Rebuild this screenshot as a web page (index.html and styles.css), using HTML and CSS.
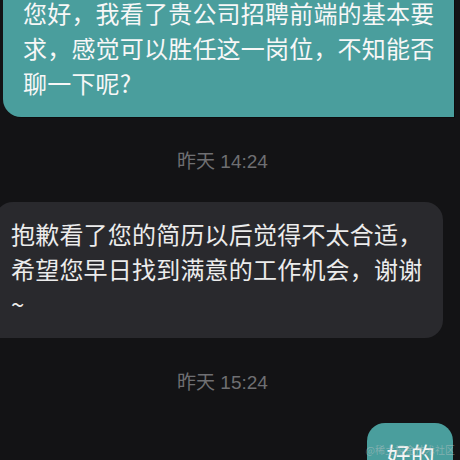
FILE: index.html
```html
<!DOCTYPE html>
<html lang="zh-CN">
<head>
<meta charset="utf-8">
<title>聊天</title>
<link rel="stylesheet" href="styles.css">
</head>
<body>
<div class="chat">
  <div class="bubble mine first">您好，我看了贵公司招聘前端的基本要求，感觉可以胜任这一岗位，不知能否聊一下呢?</div>
  <div class="time">昨天 14:24</div>
  <div class="bubble theirs">抱歉看了您的简历以后觉得不太合适，希望您早日找到满意的工作机会，谢谢~</div>
  <div class="time">昨天 15:24</div>
  <div class="bubble mine last">好的</div>
</div>
<div class="watermark">@稀土掘金技术社区</div>
</body>
</html>
```
FILE: styles.css
```css
html, body {
  margin: 0;
  padding: 0;
  background: #131315;
  height: 100%;
  overflow: hidden;
}
body {
  position: relative;
  font-family: "Noto Sans CJK SC", "Liberation Sans", sans-serif;
}
.chat {
  display: flex;
  flex-direction: column;
}
.bubble {
  font-size: 24px;
  line-height: 35px;
  letter-spacing: 0.2px;
  padding: 14px 18px 17px 20px;
  box-sizing: border-box;
  word-break: normal;
}
.mine {
  background: #4a9e9d;
  color: #f7f7f7;
  align-self: flex-end;
}
.first {
  margin: -19px 6px 0 3px;
  width: 451px;
  border-radius: 18px 18px 0 18px;
  box-shadow: 1px 1px 0 rgba(0, 0, 0, 0.35);
}
.last {
  margin-right: 7px;
  border-radius: 18px 18px 0 18px;
}
.theirs {
  background: #29292d;
  color: #ececec;
  align-self: flex-start;
  margin-left: -5px;
  width: 448px;
  padding-left: 16px;
  border-radius: 18px 18px 18px 0;
}
.time {
  font-family: "Liberation Sans", "Noto Sans CJK SC", sans-serif;
  font-size: 19px;
  line-height: 26px;
  color: #6f6f72;
  text-align: center;
  margin: 32px 15px 27px 0;
}
.watermark {
  position: absolute;
  right: 5px;
  bottom: 3px;
  font-size: 10px;
  line-height: 14px;
  color: rgba(200, 200, 200, 0.45);
}
```
